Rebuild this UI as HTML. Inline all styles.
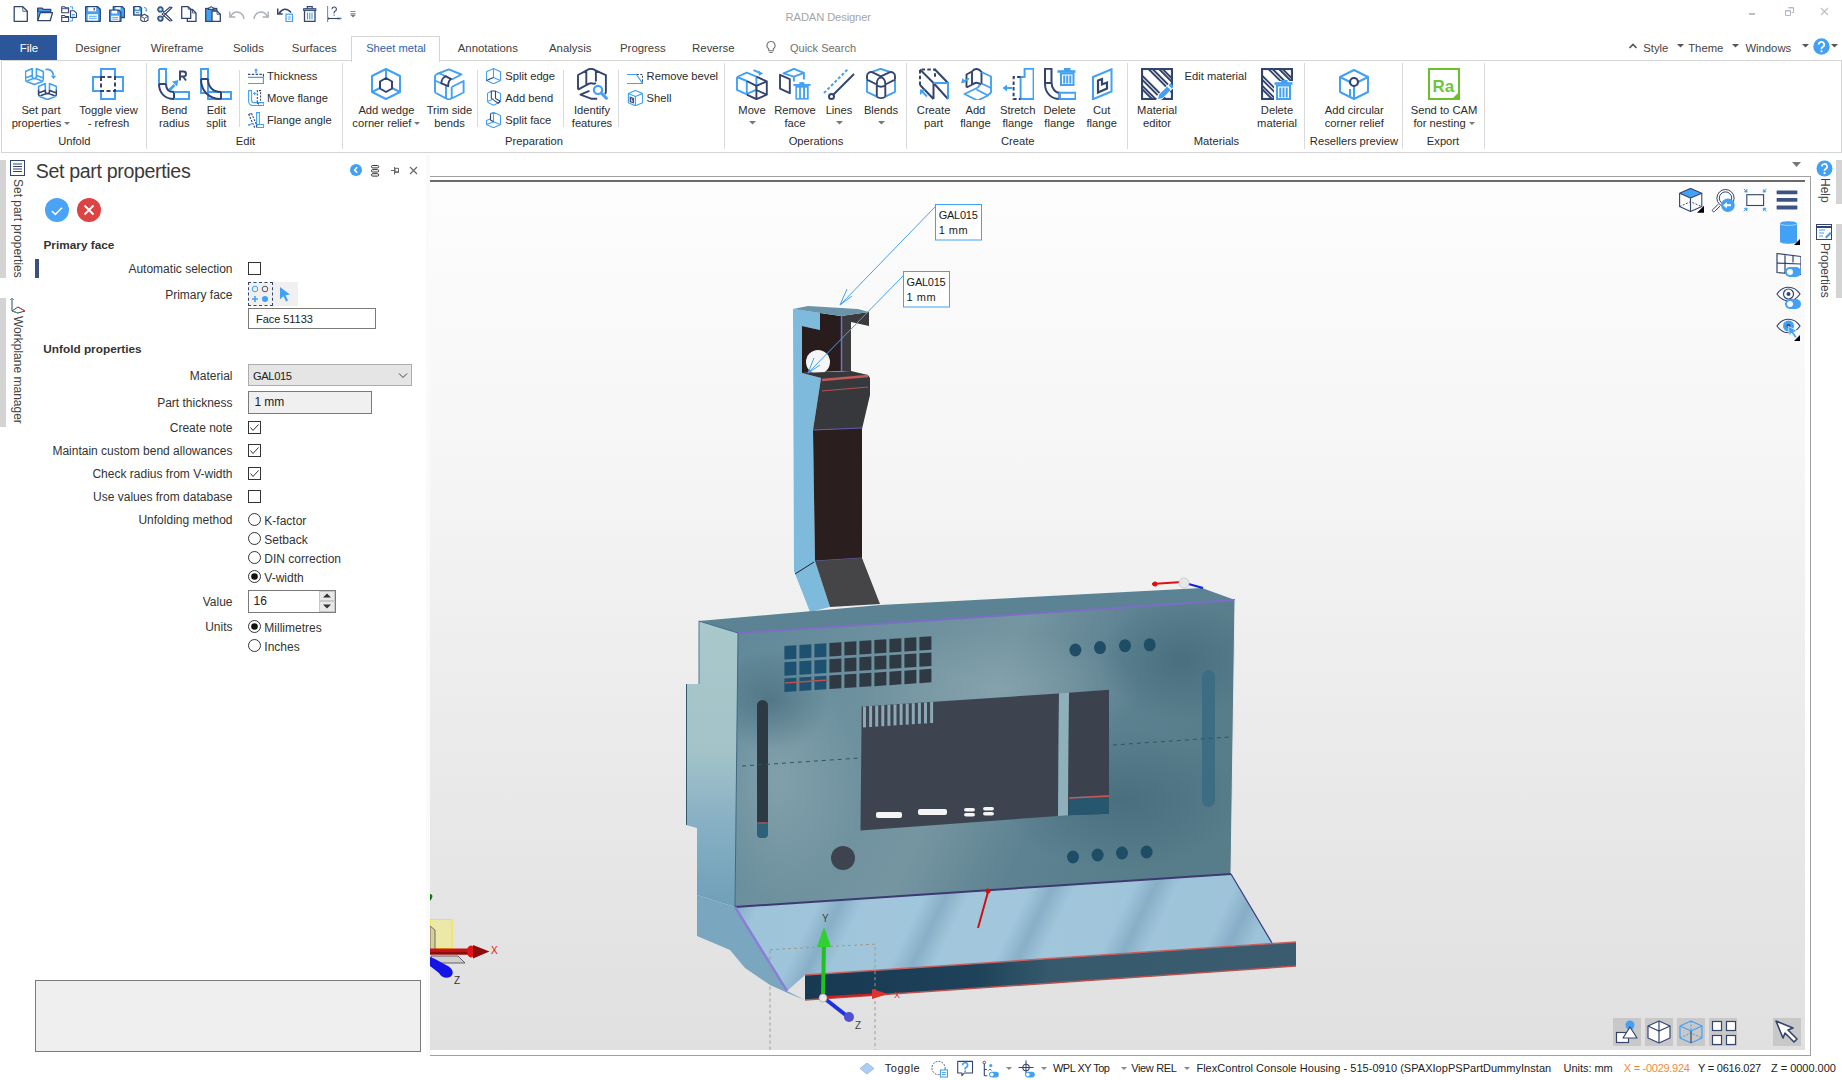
<!DOCTYPE html><html><head><meta charset="utf-8"><title>RADAN Designer</title><style>
*{margin:0;padding:0;box-sizing:border-box}
html,body{width:1842px;height:1080px;overflow:hidden;background:#fff;font-family:"Liberation Sans",sans-serif;color:#444}
.a{position:absolute;white-space:nowrap}
</style></head><body>
<svg class="a" style="left:13px;top:6px;" width="16" height="16" viewBox="0 0 16 16" fill="none"><path d="M1.2 0.7h8.6l4.5 4.6v10h-13.1z" stroke="#33456f" stroke-width="1.3" stroke-linejoin="round"/><path d="M9.8 0.7v4.6h4.5" stroke="#33456f" stroke-width="0.8"/></svg><svg class="a" style="left:37px;top:6px;" width="16" height="16" viewBox="0 0 16 16" fill="none"><path d="M0.7 2.2h4.5l1 1.2h7.5v2.5h-13z" fill="#42a1f4" stroke="#33456f" stroke-width="1.3" stroke-linejoin="round"/><path d="M0.7 3.4v11.3" stroke="#33456f" stroke-width="1.3"/><path d="M0.7 5.9h13.2v8.8h-13.2z" fill="#42a1f4"/><path d="M3.3 6.6h12.2l-2.3 8.1h-12.5z" fill="#fff" stroke="#33456f" stroke-width="1.3" stroke-linejoin="round"/></svg><svg class="a" style="left:61px;top:6px;" width="16" height="16" viewBox="0 0 16 16" fill="none"><path d="M0.7 0.7h2.8l.8 1h3.3v5h-6.9z M0.7 9.5h2.8l.8 1h3.3v5h-6.9z" stroke="#33456f" stroke-width="1.1" stroke-linejoin="round"/><path d="M0.7 2.7h6.9 M0.7 11.5h6.9" stroke="#33456f" stroke-width="0.9"/><path d="M9.5 4.8h3.6l2.4 2.4v4.3h-6z" fill="#fff" stroke="#33456f" stroke-width="1.1" stroke-linejoin="round"/><path d="M10.8 8.5h3 M10.8 10h3" stroke="#42a1f4" stroke-width="0.9"/><path d="M9 0.8h2.5v2 M9 15h2.5v-2" stroke="#42a1f4" stroke-width="1"/><path d="M10.5 2.5l1 1.3 1-1.3z M10.5 13l1-1.3 1 1.3z" fill="#42a1f4"/></svg><svg class="a" style="left:85px;top:6px;" width="16" height="16" viewBox="0 0 16 16" fill="none"><path d="M0.7 0.7h12l2.6 2.6v12h-15.2z" fill="#42a1f4" stroke="#33456f" stroke-width="1.3" stroke-linejoin="round"/><rect x="3.2" y="1.3" width="8" height="4" fill="#fff"/><rect x="8.6" y="1.8" width="1.2" height="2.6" fill="#33456f"/><rect x="2.7" y="8.2" width="10.3" height="6.4" fill="#fff"/><path d="M4 10.3h7.8 M4 12.3h7.8" stroke="#42a1f4" stroke-width="0.9"/></svg><svg class="a" style="left:109px;top:6px;" width="16" height="16" viewBox="0 0 16 16" fill="none"><path d="M4.3 0.7h9l2.3 2.3v8.5h-11.3z" fill="#42a1f4" stroke="#33456f" stroke-width="1.3" stroke-linejoin="round"/><rect x="6.5" y="1.2" width="5" height="2.5" fill="#fff"/><path d="M0.7 4.2h9l2.2 2.2v9h-11.2z" fill="#42a1f4" stroke="#33456f" stroke-width="1.3" stroke-linejoin="round"/><rect x="2.6" y="4.7" width="5.5" height="2.8" fill="#fff"/><rect x="2.2" y="9.7" width="8" height="5.1" fill="#fff"/><path d="M3.2 11.4h6 M3.2 13.2h6" stroke="#42a1f4" stroke-width="0.9"/></svg><svg class="a" style="left:133px;top:6px;" width="16" height="16" viewBox="0 0 16 16" fill="none"><path d="M0.7 0.7h6.3l1.5 1.5v6.8h-7.8z" fill="#42a1f4" stroke="#33456f" stroke-width="1.3" stroke-linejoin="round"/><rect x="2.3" y="1.2" width="3.8" height="2.3" fill="#fff"/><rect x="1.8" y="5.3" width="5.5" height="3" fill="#fff"/><path d="M2.8 6.8h3.5" stroke="#33456f" stroke-width="0.8"/><path d="M7.8 10.3l3.6-2 3.6 2v4l-3.6 2-3.6-2z" fill="#fff" stroke="#33456f" stroke-width="1.1" stroke-linejoin="round"/><path d="M7.8 10.3l3.6 2 3.6-2 M11.4 12.3v4" stroke="#33456f" stroke-width="0.9"/><path d="M11 1.5c1.8 0 2.6 1.2 2.4 3" stroke="#42a1f4" stroke-width="1.1"/><path d="M12 4.2l1.4 1.6 1.3-1.7z" fill="#42a1f4"/></svg><svg class="a" style="left:157px;top:6px;" width="16" height="16" viewBox="0 0 16 16" fill="none"><circle cx="3.4" cy="3.4" r="2.6" fill="#42a1f4" stroke="#33456f" stroke-width="1.2"/><circle cx="3.4" cy="12.6" r="2.6" fill="#42a1f4" stroke="#33456f" stroke-width="1.2"/><circle cx="3.4" cy="3.4" r="0.9" fill="#fff"/><circle cx="3.4" cy="12.6" r="0.9" fill="#fff"/><path d="M5.5 5l9.5 9.5-2 .5-8.2-7.2 M5.5 11l9.5-9.5-2-.5-8.2 7.2" fill="#fff" stroke="#33456f" stroke-width="1.1" stroke-linejoin="round"/></svg><svg class="a" style="left:181px;top:6px;" width="16" height="16" viewBox="0 0 16 16" fill="none"><path d="M0.7 0.7h6.5l2.5 2.5v9.2h-9z" fill="#fff" stroke="#33456f" stroke-width="1.3" stroke-linejoin="round"/><path d="M7.2 0.7v2.5h2.5" stroke="#33456f" stroke-width="0.8"/><path d="M9.7 3.5h1.8l3.5 3.5v8.5h-8.7v-3" stroke="#33456f" stroke-width="1.3" stroke-linejoin="round"/><path d="M11.5 3.5v3.5h3.5" stroke="#33456f" stroke-width="0.8"/></svg><svg class="a" style="left:205px;top:6px;" width="16" height="16" viewBox="0 0 16 16" fill="none"><rect x="0.7" y="2.5" width="11" height="13" fill="#42a1f4" stroke="#33456f" stroke-width="1.3"/><path d="M3.5 3.5v-1.5h1.5a1.2 1.2 0 0 1 2.4 0h1.5v1.5z" fill="#fff" stroke="#33456f" stroke-width="1.1"/><path d="M7 5h5l3.3 3.3v7.2h-8.3z" fill="#fff" stroke="#33456f" stroke-width="1.3" stroke-linejoin="round"/><path d="M12 5v3.3h3.3" stroke="#33456f" stroke-width="0.8"/></svg><svg class="a" style="left:229px;top:6px;" width="16" height="16" viewBox="0 0 16 16" fill="none"><path d="M15 13c-1-7-9-10-13.5-2.5" stroke="#aab0b8" stroke-width="1.5"/><path d="M0.8 5.5v5.5h5.5" stroke="#aab0b8" stroke-width="1.4"/></svg><svg class="a" style="left:253px;top:6px;" width="16" height="16" viewBox="0 0 16 16" fill="none"><path d="M1 13c1-7 9-10 13.5-2.5" stroke="#aab0b8" stroke-width="1.5"/><path d="M15.2 5.5v5.5h-5.5" stroke="#aab0b8" stroke-width="1.4"/></svg><svg class="a" style="left:277px;top:6px;" width="16" height="16" viewBox="0 0 16 16" fill="none"><path d="M2 7.5c3-5 8-6 12-1" stroke="#33456f" stroke-width="1.6"/><path d="M0.7 2.5v5.5h5" stroke="#33456f" stroke-width="1.5"/><rect x="9" y="8.2" width="6.5" height="7.3" fill="#fff" stroke="#42a1f4" stroke-width="1.2"/><path d="M10.8 11h3 M10.8 13h3" stroke="#42a1f4" stroke-width="0.9"/></svg><svg class="a" style="left:303px;top:6px;" width="16" height="16" viewBox="0 0 16 16" fill="none"><path d="M0.5 3.6h12.5" stroke="#42a1f4" stroke-width="2"/><path d="M0.5 2.6h12.5v2h-12.5z" stroke="#33456f" stroke-width="0.9"/><path d="M4.3 2.5v-1.8h4.9v1.8" stroke="#33456f" stroke-width="1.2"/><path d="M1.5 4.6v10.8h10.5v-10.8" stroke="#33456f" stroke-width="1.3"/><path d="M4.5 6.5v7 M6.75 6.5v7 M9 6.5v7" stroke="#42a1f4" stroke-width="1.1"/></svg><svg class="a" style="left:327px;top:6px;" width="16" height="16" viewBox="0 0 16 16" fill="none"><path d="M0.5 0v16" stroke="#42a1f4" stroke-width="1.3"/><path d="M1 12.5h12" stroke="#33456f" stroke-width="1.1"/><path d="M12.5 11l2.8 1.5-2.8 1.5z" fill="#42a1f4"/><path d="M1.5 11.5v2 M11 11.5v2" stroke="#33456f" stroke-width="0.9"/><path d="M5 3.2a2.2 2.2 0 1 1 3 2c-.7.3-.9.8-.9 1.6v.7" stroke="#33456f" stroke-width="1.1"/><circle cx="7.1" cy="9.2" r="0.6" fill="#33456f"/></svg><svg class="a" style="left:350px;top:10px;" width="6" height="8" viewBox="0 0 6 8" fill="none"><path d="M0.5 1.5h5" stroke="#888" stroke-width="1"/><path d="M0.5 3.5h5" stroke="#888" stroke-width="0.8"/><path d="M0 4.5h6l-3 3z" fill="#777"/></svg><div class="a" style="left:785.60px;top:10.12px;font-size:11.2px;line-height:14px;color:#a6a6a6;font-weight:400;letter-spacing:-0.123px;">RADAN Designer</div><div class="a" style="left:1749px;top:13px;width:6px;height:2px;background:#b9c0ca"></div><svg class="a" style="left:1785px;top:7px;" width="9" height="9" viewBox="0 0 9 9" fill="none"><path d="M3.5 0.5h5v5h-2 M0.5 3.5h5v5h-5z" stroke="#b3bac6" stroke-width="1"/><path d="M3.5 1h5 M0.5 4h5" stroke="#b3bac6" stroke-width="1"/></svg><svg class="a" style="left:1820px;top:7px;" width="9" height="9" viewBox="0 0 9 9" fill="none"><path d="M1 1l7 7 M8 1l-7 7" stroke="#b8bfca" stroke-width="1.1"/></svg>
<div class="a" style="left:0px;top:35px;width:57px;height:25px;background:#2b579a"></div><div class="a" style="left:-121.0px;width:300px;text-align:center;top:41.02px;font-size:11.5px;line-height:14px;color:#ffffff;font-weight:400;">File</div><div class="a" style="left:-52.0px;width:300px;text-align:center;top:41.05px;font-size:11.4px;line-height:14px;color:#404040;font-weight:400;">Designer</div><div class="a" style="left:27.0px;width:300px;text-align:center;top:41.05px;font-size:11.4px;line-height:14px;color:#404040;font-weight:400;">Wireframe</div><div class="a" style="left:98.4px;width:300px;text-align:center;top:41.05px;font-size:11.4px;line-height:14px;color:#404040;font-weight:400;">Solids</div><div class="a" style="left:164.3px;width:300px;text-align:center;top:41.05px;font-size:11.4px;line-height:14px;color:#404040;font-weight:400;">Surfaces</div><div class="a" style="left:337.8px;width:300px;text-align:center;top:41.05px;font-size:11.4px;line-height:14px;color:#404040;font-weight:400;">Annotations</div><div class="a" style="left:420.20000000000005px;width:300px;text-align:center;top:41.05px;font-size:11.4px;line-height:14px;color:#404040;font-weight:400;">Analysis</div><div class="a" style="left:492.79999999999995px;width:300px;text-align:center;top:41.05px;font-size:11.4px;line-height:14px;color:#404040;font-weight:400;">Progress</div><div class="a" style="left:563.3px;width:300px;text-align:center;top:41.05px;font-size:11.4px;line-height:14px;color:#404040;font-weight:400;">Reverse</div><div class="a" style="left:351px;top:36px;width:89px;height:26px;background:#fff;border:1px solid #d5d5d5;border-bottom:none;z-index:2"></div><div class="a" style="left:246.0px;width:300px;text-align:center;top:41.12px;font-size:11.2px;line-height:14px;color:#2b62b0;font-weight:400;z-index:3">Sheet metal</div><svg class="a" style="left:765px;top:40px;" width="12" height="14" viewBox="0 0 12 14" fill="none"><path d="M6 1.5a4 4 0 0 0-2.3 7.3v2h4.6v-2A4 4 0 0 0 6 1.5z" stroke="#777" stroke-width="1.1"/><path d="M4.3 12.5h3.4" stroke="#777"/></svg><div class="a" style="left:673.0px;width:300px;text-align:center;top:41.19px;font-size:11px;line-height:14px;color:#707070;font-weight:400;">Quick Search</div><svg class="a" style="left:1628px;top:42px;" width="10" height="8" viewBox="0 0 10 8" fill="none"><path d="M1.5 6l3.5-3.5 3.5 3.5" stroke="#555" stroke-width="1.6"/></svg><div class="a" style="left:1505.8px;width:300px;text-align:center;top:41.08px;font-size:11.3px;line-height:14px;color:#444;font-weight:400;">Style</div><svg class="a" style="left:1677px;top:44px;" width="7" height="4" viewBox="0 0 7 4" fill="none"><path d="M0 0h7l-3.5 3.5z" fill="#555"/></svg><svg class="a" style="left:1732px;top:44px;" width="7" height="4" viewBox="0 0 7 4" fill="none"><path d="M0 0h7l-3.5 3.5z" fill="#555"/></svg><svg class="a" style="left:1802px;top:44px;" width="7" height="4" viewBox="0 0 7 4" fill="none"><path d="M0 0h7l-3.5 3.5z" fill="#555"/></svg><svg class="a" style="left:1831px;top:44px;" width="7" height="4" viewBox="0 0 7 4" fill="none"><path d="M0 0h7l-3.5 3.5z" fill="#555"/></svg><div class="a" style="left:1555.8px;width:300px;text-align:center;top:41.08px;font-size:11.3px;line-height:14px;color:#444;font-weight:400;">Theme</div><div class="a" style="left:1618.3px;width:300px;text-align:center;top:41.08px;font-size:11.3px;line-height:14px;color:#444;font-weight:400;">Windows</div><svg class="a" style="left:1813px;top:38px;" width="17" height="17" viewBox="0 0 17 17" fill="none"><circle cx="8.5" cy="8.5" r="8.2" fill="#42a1f4"/><path d="M5.8 6.6a2.7 2.7 0 1 1 3.8 2.4c-.8.4-1.1.9-1.1 1.6v.6" stroke="#fff" stroke-width="1.8" fill="none"/><circle cx="8.5" cy="13.3" r="1.1" fill="#fff"/></svg>
<div class="a" style="left:1px;top:60px;width:1841px;height:93px;border:1px solid #d5d5d5;border-top-color:#d5d5d5"></div><div class="a" style="left:146px;top:63px;width:1px;height:86px;background:#dadada"></div><div class="a" style="left:342px;top:63px;width:1px;height:86px;background:#dadada"></div><div class="a" style="left:724px;top:63px;width:1px;height:86px;background:#dadada"></div><div class="a" style="left:906px;top:63px;width:1px;height:86px;background:#dadada"></div><div class="a" style="left:1127px;top:63px;width:1px;height:86px;background:#dadada"></div><div class="a" style="left:1304px;top:63px;width:1px;height:86px;background:#dadada"></div><div class="a" style="left:1402px;top:63px;width:1px;height:86px;background:#dadada"></div><div class="a" style="left:1484px;top:63px;width:1px;height:86px;background:#dadada"></div><div class="a" style="left:239px;top:70px;width:1px;height:57px;background:#dadada"></div><div class="a" style="left:477px;top:70px;width:1px;height:57px;background:#dadada"></div><div class="a" style="left:563px;top:70px;width:1px;height:57px;background:#dadada"></div><div class="a" style="left:618px;top:70px;width:1px;height:57px;background:#dadada"></div><svg class="a" style="left:25px;top:68px;" width="32" height="32" viewBox="0 0 32 32" fill="none">
<defs><clipPath id="sppc1"><rect x="0" y="0" width="32" height="21.5"/></clipPath><clipPath id="sppc2"><rect x="0" y="21.5" width="32" height="6.8"/></clipPath><clipPath id="sppc3"><rect x="0" y="28.3" width="32" height="4"/></clipPath></defs>
<path d="M0.5 12V3.5L7.2 0.6V8.6c0 1.2 1 2 2.2 2s2-.8 2-2V0.6L18.3 3.5V12 M0.5 12l1 1.5L9.4 16.6l7.9-3.1 1-1.5 M0.5 9.9L7 7.4 M11.6 7.4l6.7 2.5 M2.3 12.8l6-2.3 M16.6 12.8l-6-2.3" stroke="#42a1f4" stroke-width="1.6" stroke-linejoin="round"/>
<g transform="translate(13.1,15)"><g clip-path="url(#sppc1)" transform="translate(-13.1,-15)"><path transform="translate(13.1,15)" d="M0.5 12V3.5L7.2 0.6V8.6c0 1.2 1 2 2.2 2s2-.8 2-2V0.6L18.3 3.5V12 M0.5 12l1 1.5L9.4 16.6l7.9-3.1 1-1.5 M0.5 9.9L7 7.4 M11.6 7.4l6.7 2.5 M2.3 12.8l6-2.3 M16.6 12.8l-6-2.3" stroke="#42a1f4" stroke-width="1.6" stroke-linejoin="round"/></g></g>
<g clip-path="url(#sppc2)"><path transform="translate(13.1,15)" d="M0.5 12V3.5L7.2 0.6V8.6c0 1.2 1 2 2.2 2s2-.8 2-2V0.6L18.3 3.5V12 M0.5 12l1 1.5L9.4 16.6l7.9-3.1 1-1.5 M0.5 9.9L7 7.4 M11.6 7.4l6.7 2.5 M2.3 12.8l6-2.3 M16.6 12.8l-6-2.3" stroke="#33456f" stroke-width="1.6" stroke-linejoin="round"/></g>
<g clip-path="url(#sppc3)"><path transform="translate(13.1,15)" d="M0.5 12V3.5L7.2 0.6V8.6c0 1.2 1 2 2.2 2s2-.8 2-2V0.6L18.3 3.5V12 M0.5 12l1 1.5L9.4 16.6l7.9-3.1 1-1.5 M0.5 9.9L7 7.4 M11.6 7.4l6.7 2.5 M2.3 12.8l6-2.3 M16.6 12.8l-6-2.3" stroke="#42a1f4" stroke-width="1.6" stroke-linejoin="round"/></g>
<path d="M20.5 1.6c3.5-1 7.5 1 8 6" stroke="#42a1f4" stroke-width="1.8"/><path d="M25.8 7.8l2.7 3.4 2.7-3.4z" fill="#42a1f4"/></svg><svg class="a" style="left:92px;top:68px;" width="32" height="32" viewBox="0 0 32 32" fill="none">
<path d="M9 1h14v8h8v14h-8v8h-14v-8h-8v-14h8z" stroke="#42a1f4" stroke-width="2"/>
<rect x="9" y="9" width="14" height="14" fill="#fff"/>
<path d="M9 9h14v14h-14z" stroke="#33456f" stroke-width="2" stroke-dasharray="4 2.5"/></svg><svg class="a" style="left:158px;top:68px;" width="32" height="32" viewBox="0 0 32 32" fill="none">
<path d="M1 1h7v15" stroke="#42a1f4" stroke-width="2"/><path d="M1 1v15" stroke="#42a1f4" stroke-width="2"/>
<path d="M1 16c0 9 6 15 15 15 M8 16c0 5 3 8 8 8" stroke="#33456f" stroke-width="2"/>
<path d="M1 16h7 M16 24v7" stroke="#33456f" stroke-width="2"/>
<path d="M16 24h15v7h-15" stroke="#42a1f4" stroke-width="2"/>
<path d="M11.5 22l5-5" stroke="#42a1f4" stroke-width="2.6"/><path d="M14 13.5l6.5-1.5-1.5 6.5z" fill="#42a1f4"/>
<path d="M22 12.5v-9h3.5a2.5 2.5 0 0 1 0 5h-3.5 M25 8.5l3 4" stroke="#33456f" stroke-width="1.9"/></svg><svg class="a" style="left:200px;top:68px;" width="32" height="32" viewBox="0 0 32 32" fill="none">
<path d="M1 1h7v24h-7z" stroke="#42a1f4" stroke-width="2"/>
<path d="M8 24h23v7h-23z" stroke="#42a1f4" stroke-width="2"/>
<path d="M1 11c0 12 8 20 20 20 M8 11c0 8 5 13 13 13" stroke="#33456f" stroke-width="2"/>
<path d="M1 11h7 M21 24v7" stroke="#33456f" stroke-width="2"/></svg><svg class="a" style="left:370px;top:68px;" width="32" height="32" viewBox="0 0 32 32" fill="none">
<path d="M16 1l14 7v16l-14 7-14-7v-16z" stroke="#42a1f4" stroke-width="2" stroke-linejoin="round"/>
<path d="M16 1v10 M2 24l8-4 M30 24l-8-4" stroke="#42a1f4" stroke-width="2"/>
<path d="M16 10l6 3.5v7l-6 3.5-6-3.5v-7z" stroke="#33456f" stroke-width="2" stroke-linejoin="round"/></svg><svg class="a" style="left:434px;top:68px;" width="32" height="32" viewBox="0 0 32 32" fill="none">
<path d="M1 24.5V8.5c0-1.5 1-2 2-2.5L14.8 1.4l12.6 5.1-9.7 5 M1 12.5l6.5 3 M4.5 5l8 3.5 M1 24.5l11 5.8 M12 17.5v12.8c1.5 1.2 4.2 1.2 5.7 0V19 M17.7 19l11.9-6v11.5l-12 6" stroke="#42a1f4" stroke-width="1.9" stroke-linejoin="round"/>
<path d="M7.4 15.4c0-3.5 2-6.5 4.6-7.1l5.1 2.8c-2 1-3 4-2.9 7.1z" stroke="#33456f" stroke-width="1.9" stroke-linejoin="round"/></svg><svg class="a" style="left:577px;top:68px;" width="32" height="32" viewBox="0 0 32 32" fill="none">
<path d="M1 21.6V7l8.3-4.3 M9.3 2.7v13.5 M9.3 2.7c2.5-2.5 7-2.5 9.6 0v10.8 M18.9 2.7l10 4.4v16.5c0 1-.5 2-1 2.5 M1 21.6l8.3-4.4 M9.3 17.2c2.2-1.8 5-2.6 7.8-1.3l1.8-.9" stroke="#33456f" stroke-width="1.9" stroke-linejoin="round"/>
<path d="M12.4 22.8l-9 3.9 11.3 4.1h5.5" stroke="#33456f" stroke-width="1.9" stroke-linejoin="round"/>
<circle cx="21" cy="21.9" r="4.1" stroke="#42a1f4" stroke-width="2.2" fill="#fff"/><path d="M24.2 25l5.2 5.2" stroke="#42a1f4" stroke-width="3" stroke-linecap="round"/></svg><svg class="a" style="left:736px;top:68px;" width="32" height="32" viewBox="0 0 32 32" fill="none">
<path d="M1 9l9.8-4.3 9.6 4 M1 9v12.9l9.8 4.4 M1 9l9.8 4 M10.8 13v13 M20.4 8.7v13.5 M10.8 25.8l9.4-4" stroke="#42a1f4" stroke-width="1.9" stroke-linejoin="round"/>
<path d="M20.4 8.7l10.4 4.7v13.3l-10.4 4.5-9.6-4.5 M10.8 13l9.6 4.8 10.4-4.4 M20.4 17.8v13.4 M20.4 22l10 4.5" stroke="#33456f" stroke-width="1.9" stroke-linejoin="round"/>
<path d="M17.5 2.2l6.8 3" stroke="#42a1f4" stroke-width="1.9"/><path d="M22.2 2.6l5 2.8-4.2 2.4z" fill="#42a1f4"/></svg><svg class="a" style="left:779px;top:68px;" width="32" height="32" viewBox="0 0 32 32" fill="none">
<path d="M1 6.8l9.8 4.4v14l-9.8-4.6z" stroke="#33456f" stroke-width="1.9" stroke-linejoin="round"/>
<path d="M4.5 5.3l10.4-4.5 10 4.1-10 3.7z M14.9 8.6v4.8 M24.9 4.9v6.7" stroke="#42a1f4" stroke-width="1.9" stroke-linejoin="round"/>
<path d="M14.3 16.9h17.3" stroke="#42a1f4" stroke-width="1.9"/><rect x="20.4" y="14.1" width="4.9" height="2.6" fill="#42a1f4"/>
<rect x="16.4" y="17.2" width="13.3" height="14.4" fill="#42a1f4"/>
<rect x="17.9" y="19.7" width="2.2" height="10.4" fill="#fff"/><rect x="21.9" y="19.7" width="2.2" height="10.4" fill="#fff"/><rect x="26" y="19.7" width="1.9" height="10.4" fill="#fff"/></svg><svg class="a" style="left:823px;top:68px;" width="32" height="32" viewBox="0 0 32 32" fill="none">
<path d="M1 25l24-24" stroke="#42a1f4" stroke-width="2" stroke-dasharray="3 2"/>
<path d="M9 28l22-22" stroke="#33456f" stroke-width="2"/><circle cx="8.5" cy="28.5" r="2.5" stroke="#33456f" stroke-width="2" fill="#fff"/></svg><svg class="a" style="left:866px;top:68px;" width="32" height="32" viewBox="0 0 32 32" fill="none">
<path d="M6 3.8l8.5-3 9.6 3.2 M1 11.6v12.2l9.8 4.8 M29 11.6v12.2l-9.7 4.8" stroke="#42a1f4" stroke-width="1.9" stroke-linejoin="round"/>
<path d="M1 11.6V8c0-3 3-4.5 5-3.8l8.8 4.1 9.2-4.1c2-.7 5 .8 5 3.8v3.6 M1 11.6l9.8 4.9 M29 11.6l-9.7 4.9 M10.8 28.6V16c0-4 2-6.5 4.2-6.5s4.3 2.5 4.3 6.5v12.6 M10.8 28.6c2 2 6.5 2 8.5 0 M10.8 17.5c2.5 1.5 6 1.5 8.5 0" stroke="#33456f" stroke-width="1.9" stroke-linejoin="round"/></svg><svg class="a" style="left:918px;top:68px;" width="32" height="32" viewBox="0 0 32 32" fill="none">
<path d="M2 17V1.5H17V11" stroke="#33456f" stroke-width="2" stroke-dasharray="3.5 2.2"/>
<path d="M2 1.5L15.5 15 M17 1.5L30 15 M2 17L15.5 31 M15.5 15L30 31 M15.5 15V31" stroke="#33456f" stroke-width="2"/>
<path d="M15.5 15H30V31" stroke="#42a1f4" stroke-width="2"/>
<path d="M4 23.5l5 5" stroke="#42a1f4" stroke-width="1.8"/><path d="M2 21.5h5.5l-5.5 5.5z" fill="#42a1f4"/></svg><svg class="a" style="left:960px;top:68px;" width="32" height="32" viewBox="0 0 32 32" fill="none">
<path d="M6.5 19.5V6.5l5.5-3 M12 3.5v13 M12 3.5c2.5-3.5 7-3.5 9.5 0.5v12 M12.5 16.5c2.5-2.5 6-2.5 8.5 0.5 M6.5 19.5l6-3" stroke="#33456f" stroke-width="1.9" stroke-linejoin="round"/>
<path d="M21.5 4l9.5 4.5v16l-4 3.5-9.5 4.5-13-6.5 12.5-6c2-1 2.5-2 2.5-3.5 M21.5 15.5l9.5 4.5 M16.5 21.5l10.5 5.5" stroke="#42a1f4" stroke-width="1.9" stroke-linejoin="round"/>
<path d="M9 10.5l-5.5 3" stroke="#42a1f4" stroke-width="1.8"/><path d="M1 15.5l1.5-5.5 3.5 4z" fill="#42a1f4"/></svg><svg class="a" style="left:1002px;top:68px;" width="32" height="32" viewBox="0 0 32 32" fill="none">
<path d="M18.6 9H22.6V0.8H31.6V31H18.6z" stroke="#42a1f4" stroke-width="2" stroke-linejoin="miter"/>
<path d="M18.6 9H11.6V31H18.6" stroke="#33456f" stroke-width="2" stroke-dasharray="3.5 2.2"/>
<path d="M4 20h6" stroke="#42a1f4" stroke-width="2"/><path d="M0.5 20l4.5-3.5v7z" fill="#42a1f4"/></svg><svg class="a" style="left:1044px;top:68px;" width="32" height="32" viewBox="0 0 32 32" fill="none">
<path d="M1 0.8h6.5v13.5c0 6 4 10.5 8 10.5v6.2c-8 0-14.5-6-14.5-15z M1 15h6.5" stroke="#33456f" stroke-width="2" stroke-linejoin="round"/>
<path d="M15.5 24.8h16v6.2h-16z" stroke="#42a1f4" stroke-width="2"/>
<path d="M13.5 3.5h18" stroke="#42a1f4" stroke-width="2.6"/><rect x="20" y="0" width="6.5" height="3" fill="#42a1f4"/>
<path d="M17 5.5h12.5v11.5h-12.5z M20.2 7.5v8 M23.25 7.5v8 M26.3 7.5v8" stroke="#42a1f4" stroke-width="2"/></svg><svg class="a" style="left:1086px;top:68px;" width="32" height="32" viewBox="0 0 32 32" fill="none">
<path d="M7 9L25.5 1.3V23.5L7 31.2z" stroke="#42a1f4" stroke-width="2" stroke-linejoin="miter"/>
<path d="M12 12.5L16 11V16.5L21 14.5V20.5L12 24.5z" stroke="#33456f" stroke-width="2.2" stroke-linejoin="miter"/></svg><svg class="a" style="left:1141px;top:68px;" width="32" height="32" viewBox="0 0 32 32" fill="none">
<rect x="1" y="1" width="30" height="30" stroke="#33456f" stroke-width="2.2"/>
<path d="M1 7.5l23.5 23.5 M1 11.5l19.5 19.5 M1 21l10 10 M7.5 1l23.5 23.5 M11.5 1l19.5 19.5 M18 1l13 13 M21.5 1l9.5 9.5 M1 17.5l13.5 13.5" stroke="#33456f" stroke-width="1.8"/>
<path d="M15 33l1.5-6 12-12 4.5 4.5-12 12z" fill="#fff"/>
<path d="M17 31l1.2-4.5 8-8 3.5 3.5-8 8z M27.5 17.3l2-2 3.5 3.5-2 2z" fill="#42a1f4"/></svg><svg class="a" style="left:1261px;top:68px;" width="32" height="32" viewBox="0 0 32 32" fill="none">
<rect x="1" y="1" width="30" height="30" stroke="#33456f" stroke-width="2.2"/>
<path d="M1 7.5l23.5 23.5 M1 11.5l19.5 19.5 M1 21l10 10 M7.5 1l23.5 23.5 M11.5 1l19.5 19.5 M18 1l13 13 M21.5 1l9.5 9.5 M1 17.5l13.5 13.5" stroke="#33456f" stroke-width="1.8"/>
<rect x="13" y="13" width="20" height="20" fill="#fff"/>
<path d="M13.5 15.5h18" stroke="#42a1f4" stroke-width="2.6"/><rect x="20" y="12" width="6.5" height="3" fill="#42a1f4"/>
<path d="M16 17.5h13v13.5h-13z M19.3 19.5v10 M22.5 19.5v10 M25.7 19.5v10" stroke="#42a1f4" stroke-width="2"/></svg><svg class="a" style="left:1338px;top:68px;" width="32" height="32" viewBox="0 0 32 32" fill="none">
<path d="M2 9l14-7 14 7v15l-14 7-14-7z M2 9l14 7 14-7 M16 16v15" stroke="#42a1f4" stroke-width="2" stroke-linejoin="round"/>
<path d="M12 21v8" stroke="#42a1f4" stroke-width="2"/>
<circle cx="16" cy="14" r="4" fill="#fff" stroke="#33456f" stroke-width="2.2"/></svg><svg class="a" style="left:1428px;top:68px;" width="32" height="32" viewBox="0 0 32 32" fill="none">
<rect x="1" y="1" width="30" height="30" stroke="#6cc12b" stroke-width="2"/>
<path d="M24 31l7-7v7z" fill="#6cc12b"/>
<text x="4.5" y="24" font-size="17" font-weight="700" fill="#74c43a" font-family="Liberation Sans">Ra</text></svg><svg class="a" style="left:248px;top:68px;" width="16" height="16" viewBox="0 0 16 16" fill="none"><path d="M0 9.4h15.4v6.1h-15.4" stroke="#42a1f4" stroke-width="1.2"/><path d="M0 6.4h15.4v3" stroke="#33456f" stroke-width="1.2" stroke-dasharray="2.4 1.4"/><path d="M8 5v-3" stroke="#42a1f4" stroke-width="1.5"/><path d="M6 2.6l2-2.4 2 2.4z" fill="#42a1f4"/></svg><svg class="a" style="left:248px;top:90px;" width="16" height="16" viewBox="0 0 16 16" fill="none"><path d="M0.6 0.6h3v10c0 1.3.7 2 2 2h10.2v3h-10.6c-2.8 0-4.6-1.8-4.6-4.6z" stroke="#42a1f4" stroke-width="1.1" stroke-linejoin="round"/><path d="M9.3 12.2V0.6h3.3v11.6 M9.3 13l3 2.5" stroke="#33456f" stroke-width="1.1" stroke-dasharray="2 1.3"/><path d="M5 3.6h3.3 M6.6 2v3.2" stroke="#42a1f4" stroke-width="1"/></svg><svg class="a" style="left:248px;top:112px;" width="16" height="16" viewBox="0 0 16 16" fill="none"><path d="M8.6 12.5V0.6h2.8v11.9 M8.6 12.5h7v3h-7z" stroke="#42a1f4" stroke-width="1.1"/><path d="M0.8 2.5l2.6-1.4 5.5 12.6-2.4 1.6z" stroke="#33456f" stroke-width="1.1" stroke-dasharray="2 1.2"/><path d="M0.8 13.2l4-2.2" stroke="#42a1f4" stroke-width="1.1"/><circle cx="1" cy="13" r="1" fill="#42a1f4"/></svg><svg class="a" style="left:486px;top:68px;" width="16" height="16" viewBox="0 0 16 16" fill="none"><path d="M7.5 0.6l7 3.2v8.8l-7 3.2-7-3.2v-8.8z M7.5 0.6v8.9 l7 3.1" stroke="#42a1f4" stroke-width="1.1" stroke-linejoin="round"/><path d="M7.5 9.5l-7 3.1" stroke="#33456f" stroke-width="1.1"/></svg><svg class="a" style="left:486px;top:90px;" width="16" height="16" viewBox="0 0 16 16" fill="none"><path d="M5 1.2l-3.5 2.2v8 M10 1.2l4.5 2.2v8.3l-7 3.5-6-3" stroke="#42a1f4" stroke-width="1.1" stroke-linejoin="round"/><path d="M5.3 8.3V1h4.2v7.6 M5.3 8.3l2.5 1.8 M9.5 8.6l4.5 2.3-1.5 2.3-4.6-2.8" stroke="#33456f" stroke-width="1.1" stroke-linejoin="round"/><path d="M1.5 11.5l6-2.7" stroke="#42a1f4" stroke-width="1.1"/></svg><svg class="a" style="left:486px;top:112px;" width="16" height="16" viewBox="0 0 16 16" fill="none"><path d="M4.5 1.5l3-1.2 7 3.3v8.8l-7 3.4-7-3.4v-3.8l4-1.9 M7.5 0.3v9.4 M0.5 12.4l7-2.7 7 2.7" stroke="#42a1f4" stroke-width="1.1" stroke-linejoin="round"/><path d="M4.5 1.5v6.5l3 1.7" stroke="#33456f" stroke-width="1.1"/></svg><svg class="a" style="left:627px;top:68px;" width="16" height="16" viewBox="0 0 16 16" fill="none"><path d="M0 6.5h9.3l6 8.3 M0 15.5h15.6v-2.5" stroke="#42a1f4" stroke-width="1.2"/><path d="M9.8 6.5h5.8v7.5" stroke="#33456f" stroke-width="1.2" stroke-dasharray="2 1.5"/></svg><svg class="a" style="left:627px;top:90px;" width="16" height="16" viewBox="0 0 16 16" fill="none"><path d="M8.4 0.5l7.2 3v9.2l-7.2 3-7-3v-9.2z M1.4 3.5l7 3 7.2-3 M8.4 6.5v9" stroke="#42a1f4" stroke-width="1.2" stroke-linejoin="round"/><path d="M3.3 7.3l3 1.2v4.2l-3-1.2z M4.6 9.5l1.6.6" stroke="#33456f" stroke-width="1.2"/></svg><div class="a" style="left:-109.0px;width:300px;text-align:center;top:102.82px;font-size:11.2px;line-height:14px;color:#2c2c2c;font-weight:400;">Set part</div><div class="a" style="left:-109.0px;width:300px;text-align:center;top:115.82px;font-size:11.2px;line-height:14px;color:#2c2c2c;font-weight:400;">properties<span style="display:inline-block;width:0;height:0;border-left:3px solid transparent;border-right:3px solid transparent;border-top:3px solid #777;vertical-align:2px;margin-left:3px"></span></div><div class="a" style="left:-41.5px;width:300px;text-align:center;top:102.82px;font-size:11.2px;line-height:14px;color:#2c2c2c;font-weight:400;">Toggle view</div><div class="a" style="left:-41.5px;width:300px;text-align:center;top:115.82px;font-size:11.2px;line-height:14px;color:#2c2c2c;font-weight:400;">- refresh</div><div class="a" style="left:24.30000000000001px;width:300px;text-align:center;top:102.82px;font-size:11.2px;line-height:14px;color:#2c2c2c;font-weight:400;">Bend</div><div class="a" style="left:24.30000000000001px;width:300px;text-align:center;top:115.82px;font-size:11.2px;line-height:14px;color:#2c2c2c;font-weight:400;">radius</div><div class="a" style="left:66.30000000000001px;width:300px;text-align:center;top:102.82px;font-size:11.2px;line-height:14px;color:#2c2c2c;font-weight:400;">Edit</div><div class="a" style="left:66.30000000000001px;width:300px;text-align:center;top:115.82px;font-size:11.2px;line-height:14px;color:#2c2c2c;font-weight:400;">split</div><div class="a" style="left:236.39999999999998px;width:300px;text-align:center;top:102.82px;font-size:11.2px;line-height:14px;color:#2c2c2c;font-weight:400;">Add wedge</div><div class="a" style="left:236.39999999999998px;width:300px;text-align:center;top:115.82px;font-size:11.2px;line-height:14px;color:#2c2c2c;font-weight:400;">corner relief<span style="display:inline-block;width:0;height:0;border-left:3px solid transparent;border-right:3px solid transparent;border-top:3px solid #777;vertical-align:2px;margin-left:3px"></span></div><div class="a" style="left:299.5px;width:300px;text-align:center;top:102.82px;font-size:11.2px;line-height:14px;color:#2c2c2c;font-weight:400;">Trim side</div><div class="a" style="left:299.5px;width:300px;text-align:center;top:115.82px;font-size:11.2px;line-height:14px;color:#2c2c2c;font-weight:400;">bends</div><div class="a" style="left:442.0px;width:300px;text-align:center;top:102.82px;font-size:11.2px;line-height:14px;color:#2c2c2c;font-weight:400;">Identify</div><div class="a" style="left:442.0px;width:300px;text-align:center;top:115.82px;font-size:11.2px;line-height:14px;color:#2c2c2c;font-weight:400;">features</div><div class="a" style="left:602.0px;width:300px;text-align:center;top:102.82px;font-size:11.2px;line-height:14px;color:#2c2c2c;font-weight:400;">Move</div><svg class="a" style="left:749px;top:121px;" width="7" height="4" viewBox="0 0 7 4" fill="none"><path d="M0 0h7l-3.5 3.5z" fill="#777"/></svg><div class="a" style="left:645.0px;width:300px;text-align:center;top:102.82px;font-size:11.2px;line-height:14px;color:#2c2c2c;font-weight:400;">Remove</div><div class="a" style="left:645.0px;width:300px;text-align:center;top:115.82px;font-size:11.2px;line-height:14px;color:#2c2c2c;font-weight:400;">face</div><div class="a" style="left:689.0px;width:300px;text-align:center;top:102.82px;font-size:11.2px;line-height:14px;color:#2c2c2c;font-weight:400;">Lines</div><svg class="a" style="left:836px;top:121px;" width="7" height="4" viewBox="0 0 7 4" fill="none"><path d="M0 0h7l-3.5 3.5z" fill="#777"/></svg><div class="a" style="left:731.0px;width:300px;text-align:center;top:102.82px;font-size:11.2px;line-height:14px;color:#2c2c2c;font-weight:400;">Blends</div><svg class="a" style="left:878px;top:121px;" width="7" height="4" viewBox="0 0 7 4" fill="none"><path d="M0 0h7l-3.5 3.5z" fill="#777"/></svg><div class="a" style="left:783.6px;width:300px;text-align:center;top:102.82px;font-size:11.2px;line-height:14px;color:#2c2c2c;font-weight:400;">Create</div><div class="a" style="left:783.6px;width:300px;text-align:center;top:115.82px;font-size:11.2px;line-height:14px;color:#2c2c2c;font-weight:400;">part</div><div class="a" style="left:825.4px;width:300px;text-align:center;top:102.82px;font-size:11.2px;line-height:14px;color:#2c2c2c;font-weight:400;">Add</div><div class="a" style="left:825.4px;width:300px;text-align:center;top:115.82px;font-size:11.2px;line-height:14px;color:#2c2c2c;font-weight:400;">flange</div><div class="a" style="left:867.7px;width:300px;text-align:center;top:102.82px;font-size:11.2px;line-height:14px;color:#2c2c2c;font-weight:400;">Stretch</div><div class="a" style="left:867.7px;width:300px;text-align:center;top:115.82px;font-size:11.2px;line-height:14px;color:#2c2c2c;font-weight:400;">flange</div><div class="a" style="left:909.5999999999999px;width:300px;text-align:center;top:102.82px;font-size:11.2px;line-height:14px;color:#2c2c2c;font-weight:400;">Delete</div><div class="a" style="left:909.5999999999999px;width:300px;text-align:center;top:115.82px;font-size:11.2px;line-height:14px;color:#2c2c2c;font-weight:400;">flange</div><div class="a" style="left:951.7px;width:300px;text-align:center;top:102.82px;font-size:11.2px;line-height:14px;color:#2c2c2c;font-weight:400;">Cut</div><div class="a" style="left:951.7px;width:300px;text-align:center;top:115.82px;font-size:11.2px;line-height:14px;color:#2c2c2c;font-weight:400;">flange</div><div class="a" style="left:1007.0px;width:300px;text-align:center;top:102.82px;font-size:11.2px;line-height:14px;color:#2c2c2c;font-weight:400;">Material</div><div class="a" style="left:1007.0px;width:300px;text-align:center;top:115.82px;font-size:11.2px;line-height:14px;color:#2c2c2c;font-weight:400;">editor</div><div class="a" style="left:1127.0px;width:300px;text-align:center;top:102.82px;font-size:11.2px;line-height:14px;color:#2c2c2c;font-weight:400;">Delete</div><div class="a" style="left:1127.0px;width:300px;text-align:center;top:115.82px;font-size:11.2px;line-height:14px;color:#2c2c2c;font-weight:400;">material</div><div class="a" style="left:1204.3px;width:300px;text-align:center;top:102.82px;font-size:11.2px;line-height:14px;color:#2c2c2c;font-weight:400;">Add circular</div><div class="a" style="left:1204.3px;width:300px;text-align:center;top:115.82px;font-size:11.2px;line-height:14px;color:#2c2c2c;font-weight:400;">corner relief</div><div class="a" style="left:1294.0px;width:300px;text-align:center;top:102.82px;font-size:11.2px;line-height:14px;color:#2c2c2c;font-weight:400;">Send to CAM</div><div class="a" style="left:1294.0px;width:300px;text-align:center;top:115.82px;font-size:11.2px;line-height:14px;color:#2c2c2c;font-weight:400;">for nesting<span style="display:inline-block;width:0;height:0;border-left:3px solid transparent;border-right:3px solid transparent;border-top:3px solid #777;vertical-align:2px;margin-left:3px"></span></div><div class="a" style="left:267px;top:68.92px;font-size:11.2px;line-height:14px;color:#2c2c2c;font-weight:400;">Thickness</div><div class="a" style="left:267px;top:91.12px;font-size:11.2px;line-height:14px;color:#2c2c2c;font-weight:400;">Move flange</div><div class="a" style="left:267px;top:112.92px;font-size:11.2px;line-height:14px;color:#2c2c2c;font-weight:400;">Flange angle</div><div class="a" style="left:505.3px;top:68.92px;font-size:11.2px;line-height:14px;color:#2c2c2c;font-weight:400;">Split edge</div><div class="a" style="left:505.3px;top:91.12px;font-size:11.2px;line-height:14px;color:#2c2c2c;font-weight:400;">Add bend</div><div class="a" style="left:505.3px;top:112.92px;font-size:11.2px;line-height:14px;color:#2c2c2c;font-weight:400;">Split face</div><div class="a" style="left:646.6px;top:68.92px;font-size:11.2px;line-height:14px;color:#2c2c2c;font-weight:400;">Remove bevel</div><div class="a" style="left:646.6px;top:91.12px;font-size:11.2px;line-height:14px;color:#2c2c2c;font-weight:400;">Shell</div><div class="a" style="left:1184.6px;top:68.92px;font-size:11.2px;line-height:14px;color:#2c2c2c;font-weight:400;">Edit material</div><div class="a" style="left:-75.7px;width:300px;text-align:center;top:133.52px;font-size:11.2px;line-height:14px;color:#2c2c2c;font-weight:400;">Unfold</div><div class="a" style="left:95.4px;width:300px;text-align:center;top:133.52px;font-size:11.2px;line-height:14px;color:#2c2c2c;font-weight:400;">Edit</div><div class="a" style="left:384.0px;width:300px;text-align:center;top:133.52px;font-size:11.2px;line-height:14px;color:#2c2c2c;font-weight:400;">Preparation</div><div class="a" style="left:666.0px;width:300px;text-align:center;top:133.52px;font-size:11.2px;line-height:14px;color:#2c2c2c;font-weight:400;">Operations</div><div class="a" style="left:867.7px;width:300px;text-align:center;top:133.52px;font-size:11.2px;line-height:14px;color:#2c2c2c;font-weight:400;">Create</div><div class="a" style="left:1066.5px;width:300px;text-align:center;top:133.52px;font-size:11.2px;line-height:14px;color:#2c2c2c;font-weight:400;">Materials</div><div class="a" style="left:1204.0px;width:300px;text-align:center;top:133.52px;font-size:11.2px;line-height:14px;color:#2c2c2c;font-weight:400;">Resellers preview</div><div class="a" style="left:1293.0px;width:300px;text-align:center;top:133.52px;font-size:11.2px;line-height:14px;color:#2c2c2c;font-weight:400;">Export</div>
<div class="a" style="left:430px;top:176px;width:1381px;height:880px;border:1px solid #a0a0a0;border-left:none;background:#fff"></div><div class="a" style="left:430px;top:180px;width:1375px;height:870px;background:linear-gradient(#fdfdfd 0%,#f6f6f6 30%,#ececec 60%,#e4e4e4 85%,#e0e0e0 100%);border-top:2px solid #6a6a6a"></div><svg class="a" style="left:1792px;top:162px;" width="9" height="6" viewBox="0 0 9 6" fill="none"><path d="M0 0h9l-4.5 5z" fill="#777"/></svg><svg class="a" style="left:1816px;top:160px;" width="17" height="17" viewBox="0 0 17 17" fill="none"><circle cx="8.5" cy="8.5" r="8" fill="#42a1f4"/><path d="M5.9 6.6a2.6 2.6 0 1 1 3.7 2.3c-.8.4-1.1.9-1.1 1.6v.5" stroke="#fff" stroke-width="1.7" fill="none"/><circle cx="8.5" cy="13.2" r="1.1" fill="#fff"/></svg><div class="a" style="left:1832px;top:178px;transform-origin:0 0;transform:rotate(90deg);font-size:12px;line-height:14px;color:#444">Help</div><div class="a" style="left:1836px;top:160px;width:6px;height:44px;background:#d4d4d4"></div><svg class="a" style="left:1816px;top:224px;" width="17" height="17" viewBox="0 0 17 17" fill="none"><rect x="0.5" y="0.5" width="15" height="15" stroke="#33456f"/><path d="M0.5 3h15" stroke="#33456f" stroke-width="2"/><path d="M3 6h6 M3 9h5 M3 12h4" stroke="#42a1f4"/><path d="M9 13l5-5 1.5 1.5-5 5z" fill="#42a1f4"/></svg><div class="a" style="left:1832px;top:243px;transform-origin:0 0;transform:rotate(90deg);font-size:12px;line-height:14px;color:#444">Properties</div><div class="a" style="left:1836px;top:224px;width:6px;height:74px;background:#d4d4d4"></div>
<svg class="a" style="left:430px;top:182px" width="1375" height="868" viewBox="430 182 1375 868"><defs>
<linearGradient id="gfront" x1="0" y1="0" x2="1" y2="0.3">
 <stop offset="0" stop-color="#5f8898"/><stop offset="0.3" stop-color="#6c909e"/><stop offset="0.55" stop-color="#7595a1"/><stop offset="0.75" stop-color="#5d8291"/><stop offset="1" stop-color="#577c8a"/>
</linearGradient>
<radialGradient id="gcloud1" cx="0.5" cy="0.5" r="0.5"><stop offset="0" stop-color="#8aa6b0" stop-opacity="0.75"/><stop offset="1" stop-color="#8aa6b0" stop-opacity="0"/></radialGradient>
<radialGradient id="gcloud2" cx="0.5" cy="0.5" r="0.5"><stop offset="0" stop-color="#3f6475" stop-opacity="0.6"/><stop offset="1" stop-color="#3f6475" stop-opacity="0"/></radialGradient>
<linearGradient id="gleft" x1="0" y1="0" x2="0" y2="1">
 <stop offset="0" stop-color="#a9c8cc"/><stop offset="0.45" stop-color="#a3c3c8"/><stop offset="0.7" stop-color="#88b0c4"/><stop offset="1" stop-color="#6f9fba"/>
</linearGradient>
<linearGradient id="gtray" x1="0" y1="0" x2="1" y2="0">
 <stop offset="0" stop-color="#9ec4da"/><stop offset="0.5" stop-color="#a2c7dc"/><stop offset="1" stop-color="#9dc3d9"/>
</linearGradient>
<linearGradient id="gband" x1="0" y1="0" x2="1" y2="0"><stop offset="0" stop-color="#6f98b3" stop-opacity="0"/><stop offset="0.5" stop-color="#6f98b3" stop-opacity="0.5"/><stop offset="1" stop-color="#6f98b3" stop-opacity="0"/></linearGradient>
<pattern id="pstripe" width="92" height="200" patternUnits="userSpaceOnUse" patternTransform="translate(30,0) rotate(26)">
 <rect x="0" y="0" width="40" height="200" fill="url(#gband)"/>
</pattern>
<linearGradient id="glip" x1="0" y1="0" x2="1" y2="0">
 <stop offset="0" stop-color="#173a52"/><stop offset="0.35" stop-color="#1e4259"/><stop offset="0.5" stop-color="#365a6c"/><stop offset="1" stop-color="#3a5c6e"/>
</linearGradient>
<clipPath id="cfront"><polygon points="738,633 1235,600 1231,874 735,907"/></clipPath>
<clipPath id="ctray"><polygon points="735,907 1231,874 1272,943 805,975 787,991"/></clipPath>
</defs><polygon points="793,309 820,313 820,330 802,326 802,373 821,378 813,430 815,561 830,607 810,612 794,571" fill="#7dbadc"/><polygon points="802,326 820,330 820,313 841,316 841,371 802,373" fill="#281c1d"/><circle cx="818" cy="362" r="12" fill="#f6f6f6"/><polygon points="841,316 869,312 869,326 851,322 851,371 841,371" fill="#3b3b3d"/><line x1="841.5" y1="314" x2="841.5" y2="371" stroke="#7070d0" stroke-width="1.5"/><polygon points="793,309 808,306 858,309 869,312 841,316 820,313" fill="#6a94a8"/><polygon points="802,373 851,371 868,375 870,378 870,395 862,429 813,430 821,378" fill="#36383b"/><polyline points="822,380 868,376" stroke="#c35a5a" stroke-width="2.5" fill="none"/><polyline points="822,391 868,387" stroke="#b85050" stroke-width="1" fill="none"/><polygon points="813,430 862,428 862,559 815,561" fill="#2a1e1f"/><line x1="813" y1="430" x2="862" y2="428" stroke="#6060b0" stroke-width="1"/><line x1="815" y1="561" x2="862" y2="558" stroke="#6060b0" stroke-width="1"/><polygon points="815,561 862,558 880,604 830,607" fill="#454547"/><line x1="795" y1="574" x2="814" y2="562" stroke="#222" stroke-width="1"/><polygon points="699,621 880,605 1202,588 1235,600 738,633" fill="#5c8394"/><polygon points="699,621 738,633 735,907 697,895 697,828 686,825 686,684 699,684" fill="url(#gleft)"/><line x1="699" y1="621" x2="699" y2="684" stroke="#4d7d90" stroke-width="1"/><line x1="686.5" y1="684" x2="686.5" y2="825" stroke="#2e5a6e" stroke-width="1"/><polygon points="697,895 735,907 787,991 805,1000 790,994 770,985 745,968 730,950 697,936" fill="#7aa7bf"/><polygon points="738,633 1235,600 1231,874 735,907" fill="url(#gfront)"/><g clip-path="url(#cfront)"><ellipse cx="1000" cy="690" rx="140" ry="60" fill="url(#gcloud1)"/><ellipse cx="780" cy="780" rx="80" ry="120" fill="url(#gcloud1)"/><ellipse cx="1120" cy="800" rx="120" ry="70" fill="url(#gcloud2)"/><ellipse cx="1180" cy="660" rx="80" ry="60" fill="url(#gcloud2)"/><ellipse cx="770" cy="700" rx="60" ry="50" fill="url(#gcloud2)"/></g><polygon points="784.4,645.9736 796.4,645.1736000000001 796.4,658.6736000000001 784.4,659.4736" fill="#1e5070"/><polygon points="799.4,644.9836 811.4,644.1836000000001 811.4,657.6836000000001 799.4,658.4836" fill="#1e5070"/><polygon points="814.4,643.9936 826.4,643.1936000000001 826.4,656.6936000000001 814.4,657.4936" fill="#1e5070"/><polygon points="829.4,643.0036 841.4,642.2036 841.4,655.7036 829.4,656.5036" fill="#2e3944"/><polygon points="844.4,642.0136 856.4,641.2136 856.4,654.7136 844.4,655.5136" fill="#2e3944"/><polygon points="859.4,641.0236 871.4,640.2236 871.4,653.7236 859.4,654.5236" fill="#2e3944"/><polygon points="874.4,640.0336 886.4,639.2336 886.4,652.7336 874.4,653.5336" fill="#2e3944"/><polygon points="889.4,639.0436 901.4,638.2436 901.4,651.7436 889.4,652.5436" fill="#2e3944"/><polygon points="904.4,638.0536 916.4,637.2536 916.4,650.7536 904.4,651.5536" fill="#2e3944"/><polygon points="919.4,637.0636 931.4,636.2636 931.4,649.7636 919.4,650.5636" fill="#2e3944"/><polygon points="784.4,662.2736 796.4,661.4736 796.4,674.9736 784.4,675.7736" fill="#1e5070"/><polygon points="799.4,661.2836 811.4,660.4836 811.4,673.9836 799.4,674.7836" fill="#1e5070"/><polygon points="814.4,660.2936 826.4,659.4936 826.4,672.9936 814.4,673.7936" fill="#1e5070"/><polygon points="829.4,659.3036 841.4,658.5036 841.4,672.0036 829.4,672.8036" fill="#2e3944"/><polygon points="844.4,658.3136 856.4,657.5136 856.4,671.0136 844.4,671.8136" fill="#2e3944"/><polygon points="859.4,657.3235999999999 871.4,656.5236 871.4,670.0236 859.4,670.8235999999999" fill="#2e3944"/><polygon points="874.4,656.3335999999999 886.4,655.5336 886.4,669.0336 874.4,669.8335999999999" fill="#2e3944"/><polygon points="889.4,655.3435999999999 901.4,654.5436 901.4,668.0436 889.4,668.8435999999999" fill="#2e3944"/><polygon points="904.4,654.3535999999999 916.4,653.5536 916.4,667.0536 904.4,667.8535999999999" fill="#2e3944"/><polygon points="919.4,653.3635999999999 931.4,652.5636 931.4,666.0636 919.4,666.8635999999999" fill="#2e3944"/><polygon points="784.4,678.5736 796.4,677.7736000000001 796.4,691.2736000000001 784.4,692.0736" fill="#1e5070"/><polygon points="799.4,677.5836 811.4,676.7836000000001 811.4,690.2836000000001 799.4,691.0836" fill="#1e5070"/><polygon points="814.4,676.5936 826.4,675.7936000000001 826.4,689.2936000000001 814.4,690.0936" fill="#1e5070"/><polygon points="829.4,675.6036 841.4,674.8036000000001 841.4,688.3036000000001 829.4,689.1036" fill="#2e3944"/><polygon points="844.4,674.6136 856.4,673.8136000000001 856.4,687.3136000000001 844.4,688.1136" fill="#2e3944"/><polygon points="859.4,673.6236 871.4,672.8236 871.4,686.3236 859.4,687.1236" fill="#2e3944"/><polygon points="874.4,672.6336 886.4,671.8336 886.4,685.3336 874.4,686.1336" fill="#2e3944"/><polygon points="889.4,671.6436 901.4,670.8436 901.4,684.3436 889.4,685.1436" fill="#2e3944"/><polygon points="904.4,670.6536 916.4,669.8536 916.4,683.3536 904.4,684.1536" fill="#2e3944"/><polygon points="919.4,669.6636 931.4,668.8636 931.4,682.3636 919.4,683.1636" fill="#2e3944"/><line x1="785" y1="683" x2="828" y2="680" stroke="#c0504a" stroke-width="1.5"/><rect x="757" y="700" width="11" height="138" rx="5.5" fill="#2d3a44"/><rect x="757" y="822" width="11" height="16" rx="4" fill="#2d6079"/><line x1="757" y1="823" x2="768" y2="823" stroke="#c0504a" stroke-width="1.2"/><polygon points="861.7,706.6 1059,693.4 1058,816 860.5,830.6" fill="#3d4450"/><polygon points="1059,693.4 1069,692.8 1068,815.3 1058,816" fill="#8fb0ba"/><polygon points="1069,692.8 1109,689.8 1109,813.7 1068,815.3" fill="#3c424d"/><polygon points="1069,797 1109,795 1109,813.7 1068,815.3" fill="#26576f"/><line x1="1069" y1="798" x2="1109" y2="796" stroke="#d0584e" stroke-width="1.5"/><rect x="863.0" y="706.4" width="3" height="21" fill="#8aa9b5"/><rect x="869.1" y="706.0" width="3" height="21" fill="#8aa9b5"/><rect x="875.2" y="705.6" width="3" height="21" fill="#8aa9b5"/><rect x="881.3" y="705.2" width="3" height="21" fill="#8aa9b5"/><rect x="887.4" y="704.8" width="3" height="21" fill="#8aa9b5"/><rect x="893.5" y="704.4" width="3" height="21" fill="#8aa9b5"/><rect x="899.6" y="704.0" width="3" height="21" fill="#8aa9b5"/><rect x="905.7" y="703.6" width="3" height="21" fill="#8aa9b5"/><rect x="911.8" y="703.2" width="3" height="21" fill="#8aa9b5"/><rect x="917.9" y="702.8" width="3" height="21" fill="#8aa9b5"/><rect x="924.0" y="702.4" width="3" height="21" fill="#8aa9b5"/><rect x="930.1" y="702.0" width="3" height="21" fill="#8aa9b5"/><rect x="876" y="812" width="26" height="6" rx="2" fill="#f4f4f4"/><rect x="918" y="809" width="29" height="6" rx="2" fill="#f4f4f4"/><rect x="964" y="808" width="11" height="3.5" rx="2" fill="#f4f4f4"/><rect x="964" y="813" width="11" height="3.5" rx="2" fill="#f4f4f4"/><rect x="983" y="807" width="11" height="3.5" rx="2" fill="#f4f4f4"/><rect x="983" y="812" width="11" height="3.5" rx="2" fill="#f4f4f4"/><ellipse cx="1075.4" cy="650" rx="6" ry="6.5" fill="#1f4d66"/><ellipse cx="1100" cy="647.6" rx="6" ry="6.5" fill="#1f4d66"/><ellipse cx="1125" cy="645.7" rx="6" ry="6.5" fill="#1f4d66"/><ellipse cx="1149.7" cy="644.8" rx="6" ry="6.5" fill="#1f4d66"/><ellipse cx="1073" cy="857" rx="6" ry="6.5" fill="#1f4d66"/><ellipse cx="1097.6" cy="855" rx="6" ry="6.5" fill="#1f4d66"/><ellipse cx="1122" cy="853" rx="6" ry="6.5" fill="#1f4d66"/><ellipse cx="1146.6" cy="852" rx="6" ry="6.5" fill="#1f4d66"/><circle cx="843" cy="858" r="12" fill="#3d4450"/><rect x="1202" y="670" width="13" height="137" rx="6.5" fill="#3d6d82"/><polyline points="742,766 860,758" stroke="#2f5466" stroke-width="1" stroke-dasharray="4 4" fill="none"/><polyline points="1113,745 1230,737" stroke="#2f5466" stroke-width="1" stroke-dasharray="4 4" fill="none"/><line x1="738" y1="633" x2="1235" y2="600" stroke="#7b6ec4" stroke-width="2"/><line x1="699" y1="621" x2="738" y2="633" stroke="#3c6a80" stroke-width="1"/><line x1="738" y1="633" x2="735" y2="907" stroke="#3c6a80" stroke-width="1"/><line x1="1235" y1="600" x2="1231" y2="874" stroke="#e8e8e8" stroke-width="1"/><polygon points="735,907 1231,874 1272,943 805,975 787,991" fill="url(#gtray)"/><g clip-path="url(#ctray)"><rect x="700" y="860" width="620" height="160" fill="url(#pstripe)"/></g><line x1="735" y1="907" x2="1231" y2="874" stroke="#3d3a72" stroke-width="2"/><line x1="735" y1="907" x2="787" y2="991" stroke="#8a7fd8" stroke-width="2.5"/><line x1="1231" y1="874" x2="1272" y2="943" stroke="#3a3a7a" stroke-width="1.2"/><polygon points="805,975 1296,942 1296,966 805,1000" fill="url(#glip)"/><line x1="805" y1="975" x2="1296" y2="942" stroke="#c86060" stroke-width="1.5"/><line x1="805" y1="1000" x2="1296" y2="966" stroke="#b85050" stroke-width="1.5"/><rect x="935.5" y="204.5" width="46" height="35.5" fill="#fff" stroke="#42a1f4" stroke-width="1"/><rect x="903.5" y="271.5" width="46" height="35.5" fill="#fff" stroke="#42a1f4" stroke-width="1"/><line x1="935" y1="207" x2="840" y2="305" stroke="#42a1f4" stroke-width="1"/><polyline points="847,289 840,305 852,296" stroke="#42a1f4" stroke-width="1" fill="none"/><line x1="903" y1="276" x2="808" y2="373" stroke="#42a1f4" stroke-width="1"/><polyline points="814,358 808,373 820,365" stroke="#42a1f4" stroke-width="1" fill="none"/><line x1="1152" y1="584" x2="1182" y2="582" stroke="#e01010" stroke-width="2"/><circle cx="1155" cy="584" r="2.5" fill="#e01010"/><line x1="1185" y1="583" x2="1203" y2="588" stroke="#1020e0" stroke-width="2"/><circle cx="1184" cy="583" r="5" fill="#e8e8e8" stroke="#ccc"/><line x1="978" y1="928" x2="988" y2="892" stroke="#d01010" stroke-width="2"/><circle cx="988" cy="891" r="2.5" fill="#d01010"/><rect x="770" y="945" width="105" height="110" stroke="#a09890" stroke-width="1" stroke-dasharray="3 3" fill="none" transform="skewY(-3) translate(0,45)"/><line x1="823" y1="995" x2="824" y2="940" stroke="#20c020" stroke-width="4"/><path d="M817 947l7-20 7 20z" fill="#30d030"/><line x1="825" y1="997" x2="883" y2="994" stroke="#d02020" stroke-width="2"/><path d="M872 989l16 5-16 5z" fill="#e03030"/><line x1="824" y1="998" x2="847" y2="1016" stroke="#2030e0" stroke-width="4"/><circle cx="849" cy="1017" r="5" fill="#5050d0"/><circle cx="823" cy="998" r="4" fill="#e8e8e8" stroke="#999" stroke-width="0.6"/><text x="822" y="922" font-size="10" fill="#444" font-family="Liberation Sans">Y</text><text x="855" y="1029" font-size="10" fill="#444" font-family="Liberation Sans">Z</text><text x="894" y="998" font-size="9" fill="#e03030" font-family="Liberation Sans">X</text><rect x="430" y="919.5" width="22" height="29" fill="#ebe8a8" stroke="#f4ec00" stroke-width="1"/><path d="M430 926l5 4v20h-5z" fill="#d6cf95" stroke="#555" stroke-width="0.8"/><path d="M431 956l27 0 7 7h-33z" fill="#cfcfcf" stroke="#444" stroke-width="0.8"/><path d="M430 957c6 2 12 6 16 8 7 3 9 9 4 12-4 2-9 0-11-4l-9-7z" fill="#1414e6"/><rect x="430" y="948.5" width="41" height="6" fill="#c41212"/><rect x="430" y="952" width="41" height="2.5" fill="#8a0c0c"/><ellipse cx="471" cy="951.5" rx="4" ry="6" fill="#e01414"/><path d="M473 945l16.5 6.5-16.5 7z" fill="#8e0b0b"/><text x="491" y="954" font-size="10" fill="#e01010" font-family="Liberation Sans">X</text><text x="454" y="984" font-size="10" fill="#333" font-family="Liberation Sans">Z</text><path d="M430 894c2 0 3 2 2 4-1 2-2 3-2 3z" fill="#0a7a0a"/></svg><div class="a" style="left:938.70px;top:208.19px;font-size:11px;line-height:14px;color:#1a1a1a;font-weight:400;letter-spacing:-0.260px;">GAL015</div><div class="a" style="left:938.70px;top:223.19px;font-size:11px;line-height:14px;color:#1a1a1a;font-weight:400;letter-spacing:0.500px;">1 mm</div><div class="a" style="left:906.60px;top:275.19px;font-size:11px;line-height:14px;color:#1a1a1a;font-weight:400;letter-spacing:-0.260px;">GAL015</div><div class="a" style="left:906.60px;top:290.39px;font-size:11px;line-height:14px;color:#1a1a1a;font-weight:400;letter-spacing:0.533px;">1 mm</div>
<svg class="a" style="left:1679px;top:188px;" width="26" height="26" viewBox="0 0 26 26" fill="none"><path d="M0.6 5.2l10.9-4.8 11.3 4.8-11.3 4.9z" fill="#42a1f4" stroke="#33456f" stroke-width="1.1" stroke-linejoin="round"/><path d="M0.6 5.2v13.4l10.9 4.9 11.3-4.9v-13.4 M11.5 10.1v13.4" stroke="#33456f" stroke-width="1.1" stroke-linejoin="round"/><path d="M0.6 18.6l10.9-4.9 11.3 4.9 M11.5 13.7v-3.6" stroke="#33456f" stroke-width="0.9" stroke-dasharray="2 1.5"/><path d="M18 24.8l7-7v7z" fill="#000"/></svg><svg class="a" style="left:1711px;top:188px;" width="26" height="26" viewBox="0 0 26 26" fill="none"><circle cx="14.5" cy="10.1" r="8.6" stroke="#33456f" stroke-width="1"/><circle cx="14.5" cy="10.1" r="6.2" stroke="#33456f" stroke-width="1"/><path d="M7.2 16.2l-5.6 5.6a1.3 1.3 0 0 0 1.8 1.8l5.7-5.6" stroke="#33456f" stroke-width="1" fill="#fff"/><circle cx="16.9" cy="17.2" r="6.8" fill="#42a1f4"/><path d="M13.6 17.2h6.4" stroke="#fff" stroke-width="2"/><path d="M12.2 17.2l3.6-3.2v6.4z" fill="#fff"/></svg><svg class="a" style="left:1743px;top:188px;" width="25" height="25" viewBox="0 0 25 25" fill="none"><rect x="3.8" y="6.7" width="16.8" height="10.8" stroke="#33456f" stroke-width="1.1"/><path d="M0.8 0.8l2.6 2.6 M23.6 0.8l-2.6 2.6 M0.8 23.4l2.6-2.6 M23.6 23.4l-2.6-2.6" stroke="#42a1f4" stroke-width="1"/><path d="M4.2 4.2l-2.8-.4 2.4-2.4z M20.2 4.2l2.8-.4-2.4-2.4z M4.2 20l-2.8.4 2.4 2.4z M20.2 20l2.8.4-2.4 2.4z" fill="#42a1f4" stroke="#42a1f4" stroke-width="0.8"/></svg><svg class="a" style="left:1776px;top:190px;" width="24" height="20" viewBox="0 0 24 20" fill="none"><rect x="0.6" y="0.4" width="20.8" height="3.8" rx="0.6" fill="#3d5386"/><rect x="0.6" y="8.1" width="20.8" height="3.6" rx="0.6" fill="#3d5386"/><rect x="0.6" y="15.5" width="20.8" height="3.9" rx="0.6" fill="#3d5386"/></svg><svg class="a" style="left:1776px;top:220px;" width="25" height="25" viewBox="0 0 25 25" fill="none"><path d="M4 3.5c0-3 17-3 17 0v18c0 3-17 3-17 0z" fill="#42a1f4"/><path d="M4 3.5c0 2.5 17 2.5 17 0" stroke="#cde" stroke-width="0.8"/><path d="M18 25l6-6v6z" fill="#000"/></svg><svg class="a" style="left:1776px;top:252px;" width="25" height="25" viewBox="0 0 25 25" fill="none"><path d="M1 1.5l24 3v18l-24-2z M1 11l24 1 M9 2.5v19 M17 3.5v7" stroke="#33456f" stroke-width="1.2"/><rect x="9" y="15" width="16" height="10" rx="5" fill="#42a1f4"/><circle cx="14" cy="20" r="3" fill="#fff"/></svg><svg class="a" style="left:1776px;top:284px;" width="25" height="25" viewBox="0 0 25 25" fill="none"><path d="M1 10c6-9 17-9 23 0-6 9-17 9-23 0z" stroke="#33456f" stroke-width="1.2"/><circle cx="12.5" cy="10" r="5" stroke="#33456f" stroke-width="1.2" fill="#fff"/><circle cx="12.5" cy="10" r="2" fill="#33456f"/><rect x="9" y="15" width="16" height="10" rx="5" fill="#42a1f4"/><circle cx="14" cy="20" r="3" fill="#fff"/></svg><svg class="a" style="left:1776px;top:316px;" width="25" height="25" viewBox="0 0 25 25" fill="none"><path d="M1 10c6-9 17-9 23 0-6 9-17 9-23 0z" stroke="#33456f" stroke-width="1.2"/><circle cx="12.5" cy="10" r="5.5" fill="#42a1f4"/><circle cx="12.5" cy="10" r="2" fill="#33456f"/><path d="M12 10l9 5-3.5 1 3.5 5-2 1-3.5-5-2 3z" fill="#42a1f4" stroke="#fff" stroke-width="0.6"/><path d="M18 25l6-6v6z" fill="#000"/></svg><div class="a" style="left:1613px;top:1018px;width:28px;height:28px;background:#c8c8c8"></div><div class="a" style="left:1645px;top:1018px;width:28px;height:28px;background:#c8c8c8"></div><div class="a" style="left:1677px;top:1018px;width:28px;height:28px;background:#c8c8c8"></div><div class="a" style="left:1709px;top:1018px;width:28px;height:28px;background:#c8c8c8"></div><div class="a" style="left:1773px;top:1018px;width:28px;height:28px;background:#c8c8c8"></div><svg class="a" style="left:1613px;top:1018px;" width="28" height="28" viewBox="0 0 28 28" fill="none"><circle cx="17" cy="7" r="4.5" fill="#42a1f4"/><rect x="3.5" y="14.5" width="12" height="10" fill="#fff" stroke="#33456f" stroke-width="1.2"/><path d="M10 20l7-11 7 11z" fill="#fff" stroke="#33456f" stroke-width="1.2" stroke-linejoin="round"/></svg><svg class="a" style="left:1645px;top:1018px;" width="28" height="28" viewBox="0 0 28 28" fill="none"><path d="M14 3l11 5v12l-11 5-11-5v-12z" fill="#fff" stroke="#33456f" stroke-width="1.2" stroke-linejoin="round"/><path d="M3 8l11 5 11-5 M14 13v12 M14 3v10" stroke="#33456f" stroke-width="1.2"/></svg><svg class="a" style="left:1677px;top:1018px;" width="28" height="28" viewBox="0 0 28 28" fill="none"><path d="M14 3l11 5v12l-11 5-11-5v-12z M3 8l11 5 11-5" stroke="#42a1f4" stroke-width="1.2" stroke-linejoin="round"/><path d="M14 3v10 M3 20l11-5 11 5" stroke="#42a1f4" stroke-width="1" stroke-dasharray="2 1.5"/><path d="M14 13v12" stroke="#33456f" stroke-width="1.2"/></svg><svg class="a" style="left:1709px;top:1018px;" width="28" height="28" viewBox="0 0 28 28" fill="none"><rect x="3.5" y="3.5" width="9" height="9" fill="#fff" stroke="#33456f" stroke-width="1.2"/><rect x="17.5" y="3.5" width="9" height="9" fill="#fff" stroke="#33456f" stroke-width="1.2"/><rect x="3.5" y="17.5" width="9" height="9" fill="#fff" stroke="#33456f" stroke-width="1.2"/><rect x="17.5" y="17.5" width="9" height="9" fill="#fff" stroke="#33456f" stroke-width="1.2"/></svg><svg class="a" style="left:1773px;top:1018px;" width="28" height="28" viewBox="0 0 28 28" fill="none"><path d="M3 3l17 7-5 2 9 9-3 3-9-9-2 5z" fill="#fff" stroke="#33456f" stroke-width="1.6" stroke-linejoin="round"/></svg>
<div class="a" style="left:0px;top:160px;width:6px;height:118px;background:#d4d4d4"></div><div class="a" style="left:0px;top:298px;width:6px;height:129px;background:#d4d4d4"></div><svg class="a" style="left:10px;top:160px;" width="16" height="17" viewBox="0 0 16 17" fill="none"><rect x="0.5" y="0.5" width="14" height="15" stroke="#33456f"/><path d="M3 4h9 M3 6.5h9 M3 9h9 M3 11.5h9" stroke="#33456f"/></svg><div class="a" style="left:25px;top:179px;transform-origin:0 0;transform:rotate(90deg);font-size:12px;line-height:14px;color:#444">Set part properties</div><svg class="a" style="left:10px;top:297px;" width="17" height="17" viewBox="0 0 17 17" fill="none"><path d="M2 2v12 M2 14l6-4 7 4-7 2z" stroke="#33456f" stroke-width="1"/><path d="M8 10l7 4" stroke="#e04040"/><path d="M2 14l6 2" stroke="#40a040"/><path d="M0 3l2-2 2 2" stroke="#42a1f4"/></svg><div class="a" style="left:25px;top:316px;transform-origin:0 0;transform:rotate(90deg);font-size:12px;line-height:14px;color:#444">Workplane manager</div><div class="a" style="left:35.70px;top:159.41px;font-size:19.6px;line-height:24px;color:#3a3a3a;font-weight:400;letter-spacing:-0.344px;">Set part properties</div><svg class="a" style="left:350px;top:164px;" width="12" height="12" viewBox="0 0 12 12" fill="none"><circle cx="6" cy="6" r="6" fill="#42a1f4"/><path d="M7.2 3.3l-2.6 2.7 2.6 2.7" stroke="#fff" stroke-width="1.5"/></svg><svg class="a" style="left:370px;top:164px;" width="10" height="13" viewBox="0 0 10 13" fill="none"><rect x="1.5" y="1.5" width="7.2" height="2.4" rx="1.2" stroke="#333" stroke-width="1"/><rect x="1.5" y="5.6" width="7.2" height="2.4" rx="1.2" stroke="#333" stroke-width="1"/><rect x="1.5" y="9.7" width="7.2" height="2.4" rx="1.2" stroke="#333" stroke-width="1"/></svg><svg class="a" style="left:390px;top:166px;" width="10" height="9" viewBox="0 0 10 9" fill="none"><path d="M1 4.5h3 M4.5 1v7.5" stroke="#666" stroke-width="1"/><path d="M5 2.3h3.5v4h-3.5z" stroke="#666" stroke-width="1"/><rect x="5" y="5.3" width="4" height="1.3" fill="#666"/></svg><svg class="a" style="left:409px;top:166px;" width="9" height="9" viewBox="0 0 9 9" fill="none"><path d="M1 1l7 7 M8 1l-7 7" stroke="#666" stroke-width="1.2"/></svg><svg class="a" style="left:45px;top:198px;" width="24" height="24" viewBox="0 0 24 24" fill="none"><circle cx="12" cy="12" r="12" fill="#49a3f6"/><path d="M6.8 13l3.6 3.4 6.6-6.6" stroke="#fff" stroke-width="1.5"/></svg><svg class="a" style="left:77px;top:198px;" width="24" height="24" viewBox="0 0 24 24" fill="none"><circle cx="12" cy="12" r="12" fill="#dd4343"/><path d="M7.5 7.5l9 9 M16.5 7.5l-9 9" stroke="#fff" stroke-width="1.8"/></svg><div class="a" style="left:43.5px;top:237.61px;font-size:11.8px;line-height:15px;color:#333;font-weight:700;">Primary face</div><div class="a" style="left:43.3px;top:342.11px;font-size:11.8px;line-height:15px;color:#333;font-weight:700;">Unfold properties</div><div class="a" style="left:35px;top:259px;width:4px;height:19px;background:#3d4f7c"></div><div class="a" style="left:-167.5px;width:400px;text-align:right;top:262.34px;font-size:12px;line-height:15px;color:#333;font-weight:400;">Automatic selection</div><svg class="a" style="left:248px;top:262px;" width="13" height="13" viewBox="0 0 13 13" fill="none"><rect x="0.5" y="0.5" width="12" height="12" stroke="#333" fill="#fff"/></svg><div class="a" style="left:-167.5px;width:400px;text-align:right;top:288.34px;font-size:12px;line-height:15px;color:#333;font-weight:400;">Primary face</div><div class="a" style="left:248px;top:282px;width:25px;height:24px;border:1px dashed #34466e;background:#f0f0f0"></div><svg class="a" style="left:250px;top:284px;" width="21" height="20" viewBox="0 0 21 20" fill="none"><circle cx="5" cy="5" r="2.8" stroke="#42a1f4" stroke-width="1"/><circle cx="15" cy="5" r="2.8" stroke="#556" stroke-width="1"/><circle cx="15" cy="15" r="3" fill="#42a1f4"/><path d="M5 12v6 M2 15h6" stroke="#42a1f4" stroke-width="1.6"/></svg><div class="a" style="left:273px;top:282px;width:25px;height:24px;background:#f0f0f0"></div><svg class="a" style="left:279px;top:286px;" width="12" height="16" viewBox="0 0 12 16" fill="none"><path d="M1 1l10 7.5-4.5 .8 2.5 5.2-2 1-2.5-5.3-3.5 3z" fill="#42a1f4"/></svg><div class="a" style="left:248px;top:308px;width:128px;height:21px;border:1px solid #7a7a7a;background:#fff"></div><div class="a" style="left:256.00px;top:311.99px;font-size:11px;line-height:14px;color:#222;font-weight:400;letter-spacing:-0.044px;">Face 51133</div><div class="a" style="left:-167.5px;width:400px;text-align:right;top:369.34px;font-size:12px;line-height:15px;color:#333;font-weight:400;">Material</div><div class="a" style="left:248px;top:364px;width:164px;height:22px;border:1px solid #adadad;background:#e5e5e5"></div><div class="a" style="left:253.00px;top:369.32px;font-size:11.2px;line-height:14px;color:#222;font-weight:400;letter-spacing:-0.400px;">GAL015</div><svg class="a" style="left:398px;top:372px;" width="10" height="7" viewBox="0 0 10 7" fill="none"><path d="M1 1.5l4 4 4-4" stroke="#444" stroke-width="1"/></svg><div class="a" style="left:-167.5px;width:400px;text-align:right;top:396.34px;font-size:12px;line-height:15px;color:#333;font-weight:400;">Part thickness</div><div class="a" style="left:248px;top:391px;width:124px;height:23px;border:1px solid #7a7a7a;background:#f0f0f0"></div><div class="a" style="left:254.50px;top:394.54px;font-size:12px;line-height:15px;color:#222;font-weight:400;letter-spacing:-0.067px;">1 mm</div><div class="a" style="left:-167.5px;width:400px;text-align:right;top:421.34px;font-size:12px;line-height:15px;color:#333;font-weight:400;">Create note</div><svg class="a" style="left:248px;top:421px;" width="13" height="13" viewBox="0 0 13 13" fill="none"><rect x="0.5" y="0.5" width="12" height="12" stroke="#333" fill="#fff"/><path d="M2.5 6.5l2.5 3 5.5-6" stroke="#333" stroke-width="1"/></svg><div class="a" style="left:-167.5px;width:400px;text-align:right;top:444.34px;font-size:12px;line-height:15px;color:#333;font-weight:400;">Maintain custom bend allowances</div><svg class="a" style="left:248px;top:444px;" width="13" height="13" viewBox="0 0 13 13" fill="none"><rect x="0.5" y="0.5" width="12" height="12" stroke="#333" fill="#fff"/><path d="M2.5 6.5l2.5 3 5.5-6" stroke="#333" stroke-width="1"/></svg><div class="a" style="left:-167.5px;width:400px;text-align:right;top:467.34px;font-size:12px;line-height:15px;color:#333;font-weight:400;">Check radius from V-width</div><svg class="a" style="left:248px;top:467px;" width="13" height="13" viewBox="0 0 13 13" fill="none"><rect x="0.5" y="0.5" width="12" height="12" stroke="#333" fill="#fff"/><path d="M2.5 6.5l2.5 3 5.5-6" stroke="#333" stroke-width="1"/></svg><div class="a" style="left:-167.5px;width:400px;text-align:right;top:490.34px;font-size:12px;line-height:15px;color:#333;font-weight:400;">Use values from database</div><svg class="a" style="left:248px;top:490px;" width="13" height="13" viewBox="0 0 13 13" fill="none"><rect x="0.5" y="0.5" width="12" height="12" stroke="#333" fill="#fff"/></svg><div class="a" style="left:-167.5px;width:400px;text-align:right;top:513.34px;font-size:12px;line-height:15px;color:#333;font-weight:400;">Unfolding method</div><svg class="a" style="left:248px;top:512.8px;" width="13" height="13" viewBox="0 0 13 13" fill="none"><circle cx="6.5" cy="6.5" r="6" stroke="#333" fill="#fff"/></svg><div class="a" style="left:264.3px;top:513.84px;font-size:12px;line-height:15px;color:#333;font-weight:400;">K-factor</div><svg class="a" style="left:248px;top:531.8px;" width="13" height="13" viewBox="0 0 13 13" fill="none"><circle cx="6.5" cy="6.5" r="6" stroke="#333" fill="#fff"/></svg><div class="a" style="left:264.3px;top:532.84px;font-size:12px;line-height:15px;color:#333;font-weight:400;">Setback</div><svg class="a" style="left:248px;top:550.8px;" width="13" height="13" viewBox="0 0 13 13" fill="none"><circle cx="6.5" cy="6.5" r="6" stroke="#333" fill="#fff"/></svg><div class="a" style="left:264.3px;top:551.84px;font-size:12px;line-height:15px;color:#333;font-weight:400;">DIN correction</div><svg class="a" style="left:248px;top:569.8px;" width="13" height="13" viewBox="0 0 13 13" fill="none"><circle cx="6.5" cy="6.5" r="6" stroke="#333" fill="#fff"/><circle cx="6.5" cy="6.5" r="3.3" fill="#111"/></svg><div class="a" style="left:264.3px;top:570.84px;font-size:12px;line-height:15px;color:#333;font-weight:400;">V-width</div><div class="a" style="left:-167.5px;width:400px;text-align:right;top:595.34px;font-size:12px;line-height:15px;color:#333;font-weight:400;">Value</div><div class="a" style="left:248px;top:590px;width:88px;height:23px;border:1px solid #7a7a7a;background:#fff"></div><div class="a" style="left:253.5px;top:593.84px;font-size:12px;line-height:15px;color:#222;font-weight:400;">16</div><div class="a" style="left:319px;top:591px;width:16px;height:10px;background:#e8e8e8;border:1px solid #c8c8c8"></div><div class="a" style="left:319px;top:601px;width:16px;height:11px;background:#e8e8e8;border:1px solid #c8c8c8"></div><svg class="a" style="left:323px;top:593px;" width="8" height="5" viewBox="0 0 8 5" fill="none"><path d="M0 4.5l4-4 4 4z" fill="#333"/></svg><svg class="a" style="left:323px;top:604px;" width="8" height="5" viewBox="0 0 8 5" fill="none"><path d="M0 0.5l4 4 4-4z" fill="#333"/></svg><div class="a" style="left:-167.5px;width:400px;text-align:right;top:620.34px;font-size:12px;line-height:15px;color:#333;font-weight:400;">Units</div><svg class="a" style="left:248px;top:619.8px;" width="13" height="13" viewBox="0 0 13 13" fill="none"><circle cx="6.5" cy="6.5" r="6" stroke="#333" fill="#fff"/><circle cx="6.5" cy="6.5" r="3.3" fill="#111"/></svg><div class="a" style="left:264.3px;top:620.84px;font-size:12px;line-height:15px;color:#333;font-weight:400;">Millimetres</div><svg class="a" style="left:248px;top:638.8px;" width="13" height="13" viewBox="0 0 13 13" fill="none"><circle cx="6.5" cy="6.5" r="6" stroke="#333" fill="#fff"/></svg><div class="a" style="left:264.3px;top:639.84px;font-size:12px;line-height:15px;color:#333;font-weight:400;">Inches</div><div class="a" style="left:35px;top:980px;width:386px;height:72px;border:1px solid #7a7a7a;background:#efefef"></div><div class="a" style="left:426px;top:153px;width:4px;height:903px;background:#fafafa"></div>
<svg class="a" style="left:859px;top:1062px;" width="16" height="13" viewBox="0 0 16 13" fill="none"><path d="M1 6.5l7-5.5 7 5.5-7 5.5z" fill="#a9cff4" stroke="#9ab0c8" stroke-width="0.8"/></svg><div class="a" style="left:884.80px;top:1061.49px;font-size:11px;line-height:14px;color:#222;font-weight:400;letter-spacing:0.500px;">Toggle</div><svg class="a" style="left:930px;top:1060px;" width="18" height="18" viewBox="0 0 18 18" fill="none"><circle cx="8.5" cy="8" r="6.6" stroke="#33456f" stroke-width="0.9" stroke-dasharray="1.8 1.3"/><rect x="10.5" y="10" width="7" height="7" fill="#fff" stroke="#42a1f4" stroke-width="1.1"/><path d="M12 12.5h4 M12 14.5h4" stroke="#42a1f4" stroke-width="0.9"/></svg><svg class="a" style="left:957px;top:1060px;" width="17" height="18" viewBox="0 0 17 18" fill="none"><path d="M0.7 1.4h14.8v11.6h-8.2l-2.4 2.6v-2.6h-4.2z" stroke="#33456f" stroke-width="1.1" stroke-linejoin="round"/><path d="M5.6 5.3a2.5 2.5 0 1 1 3.4 2.2c-.7.3-.9.7-.9 1.4v.6" stroke="#42a1f4" stroke-width="1.6"/><circle cx="8.1" cy="11.2" r="0.9" fill="#42a1f4"/></svg><svg class="a" style="left:982px;top:1060px;" width="18" height="18" viewBox="0 0 18 18" fill="none"><circle cx="2.3" cy="2.5" r="1.3" stroke="#33456f" stroke-width="0.9"/><path d="M2.3 3.8v12 M2.3 9.5h2.5 M2.3 15.8h3" stroke="#33456f" stroke-width="1.1"/><circle cx="8.8" cy="5.5" r="1.6" fill="#42a1f4"/><path d="M6.5 10.5a1.6 1.6 0 0 1 3 0" stroke="#33456f" stroke-width="0.8"/><rect x="7" y="11.8" width="9.8" height="5.6" rx="2.8" fill="#42a1f4"/><circle cx="9.8" cy="14.6" r="1.8" fill="#fff"/></svg><svg class="a" style="left:1005.5px;top:1067px;" width="6" height="4" viewBox="0 0 6 4" fill="none"><path d="M0 0h6l-3 3z" fill="#888"/></svg><svg class="a" style="left:1040.5px;top:1067px;" width="6" height="4" viewBox="0 0 6 4" fill="none"><path d="M0 0h6l-3 3z" fill="#888"/></svg><svg class="a" style="left:1120.5px;top:1067px;" width="6" height="4" viewBox="0 0 6 4" fill="none"><path d="M0 0h6l-3 3z" fill="#888"/></svg><svg class="a" style="left:1184.3px;top:1067px;" width="6" height="4" viewBox="0 0 6 4" fill="none"><path d="M0 0h6l-3 3z" fill="#888"/></svg><svg class="a" style="left:1018px;top:1060px;" width="17" height="18" viewBox="0 0 17 18" fill="none"><path d="M0.5 7.5h15 M8 0.5v15" stroke="#33456f" stroke-width="1.1"/><circle cx="8" cy="7.5" r="3.2" stroke="#33456f" stroke-width="1.1"/><rect x="7" y="11.8" width="9.8" height="5.6" rx="2.8" fill="#42a1f4"/><circle cx="9.8" cy="14.6" r="1.8" fill="#fff"/></svg><div class="a" style="left:1053.00px;top:1061.49px;font-size:11px;line-height:14px;color:#222;font-weight:400;letter-spacing:-0.511px;">WPL XY Top</div><div class="a" style="left:1131.20px;top:1061.49px;font-size:11px;line-height:14px;color:#222;font-weight:400;letter-spacing:-0.343px;">View REL</div><div class="a" style="left:1196.40px;top:1061.49px;font-size:11px;line-height:14px;color:#222;font-weight:400;letter-spacing:0.035px;">FlexControl Console Housing - 515-0910 (SPAXIopPSPartDummyInstan</div><div class="a" style="left:1563.50px;top:1061.49px;font-size:11px;line-height:14px;color:#222;font-weight:400;letter-spacing:-0.037px;">Units: mm</div><div class="a" style="left:1623.80px;top:1061.49px;font-size:11px;line-height:14px;color:#f28a3c;font-weight:400;letter-spacing:-0.275px;">X = -0029.924</div><div class="a" style="left:1698.00px;top:1061.49px;font-size:11px;line-height:14px;color:#222;font-weight:400;letter-spacing:-0.218px;">Y = 0616.027</div><div class="a" style="left:1771.00px;top:1061.49px;font-size:11px;line-height:14px;color:#222;font-weight:400;letter-spacing:-0.027px;">Z = 0000.000</div>
</body></html>
